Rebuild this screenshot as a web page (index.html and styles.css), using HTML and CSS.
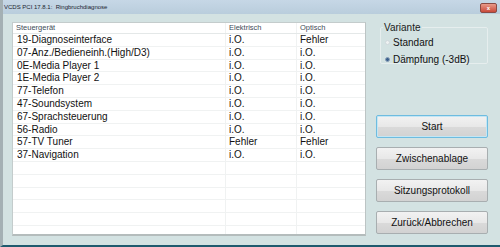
FILE: index.html
```html
<!DOCTYPE html>
<html lang="de">
<head>
    <meta charset="UTF-8" />
    <title>VCDS PCI 17.8.1: Ringbruchdiagnose</title>
    <link rel="stylesheet" href="styles.css">
</head>
<body>
    <div class="window">
        <div class="titlebar">
            <span class="title">VCDS PCI 17.8.1:&nbsp; Ringbruchdiagnose</span>
            <span class="close-btn"><span class="close-x">x</span></span>
        </div>
        <div class="content">
            <div class="list-box">
                <div class="row head">
                    <div class="cell first">Steuergerät</div>
                    <div class="cell">Elektrisch</div>
                    <div class="cell">Optisch</div>
                </div>
                <div class="row"><div class="cell first">19-Diagnoseinterface</div><div class="cell">i.O.</div><div class="cell">Fehler</div></div>
                <div class="row"><div class="cell first">07-Anz./Bedieneinh.(High/D3)</div><div class="cell">i.O.</div><div class="cell">i.O.</div></div>
                <div class="row"><div class="cell first">0E-Media Player 1</div><div class="cell">i.O.</div><div class="cell">i.O.</div></div>
                <div class="row"><div class="cell first">1E-Media Player 2</div><div class="cell">i.O.</div><div class="cell">i.O.</div></div>
                <div class="row"><div class="cell first">77-Telefon</div><div class="cell">i.O.</div><div class="cell">i.O.</div></div>
                <div class="row"><div class="cell first">47-Soundsystem</div><div class="cell">i.O.</div><div class="cell">i.O.</div></div>
                <div class="row"><div class="cell first">67-Sprachsteuerung</div><div class="cell">i.O.</div><div class="cell">i.O.</div></div>
                <div class="row"><div class="cell first">56-Radio</div><div class="cell">i.O.</div><div class="cell">i.O.</div></div>
                <div class="row"><div class="cell first">57-TV Tuner</div><div class="cell">Fehler</div><div class="cell">Fehler</div></div>
                <div class="row"><div class="cell first">37-Navigation</div><div class="cell">i.O.</div><div class="cell">i.O.</div></div>
                <div class="row"><div class="cell first"></div><div class="cell"></div><div class="cell"></div></div>
                <div class="row"><div class="cell first"></div><div class="cell"></div><div class="cell"></div></div>
                <div class="row"><div class="cell first"></div><div class="cell"></div><div class="cell"></div></div>
                <div class="row"><div class="cell first"></div><div class="cell"></div><div class="cell"></div></div>
                <div class="row"><div class="cell first"></div><div class="cell"></div><div class="cell"></div></div>
                <div class="row last"><div class="cell first"></div><div class="cell"></div><div class="cell"></div></div>
            </div>
            <div class="side">
                <fieldset class="group">
                    <legend>Variante</legend>
                    <label class="radio"><span class="dot"></span>Standard</label>
                    <label class="radio"><span class="dot on"></span>Dämpfung (-3dB)</label>
                </fieldset>
                <div class="buttons">
                    <div class="btn default">Start</div>
                    <div class="btn">Zwischenablage</div>
                    <div class="btn">Sitzungsprotokoll</div>
                    <div class="btn">Zurück/Abbrechen</div>
                </div>
            </div>
        </div>
    </div>
</body>
</html>
```

FILE: styles.css
```css
:root {
    --win-bg: #d3e2e2;
    --text: #111;
    --grid-line: #f0f2f2;
}
body {
    margin: 0;
    padding: 0;
    font-family: 'Liberation Sans', Arial, sans-serif;
    color: var(--text);
    background: #1f5a6e;
}
.window {
    width: 497px;
    height: 245px;
    border-left: 3px solid #a4b0b4;
    border-bottom: 2px solid #1f5a6e;
    background: var(--win-bg);
    display: flex;
    flex-direction: column;
}
.titlebar {
    height: 14px;
    background: linear-gradient(#c6d7e6, #b9cddc);
    display: flex;
    align-items: center;
    justify-content: space-between;
    padding: 0 3px 0 1px;
}
.title {
    font-size: 6px;
    color: #1a2530;
}
.close-btn {
    width: 15px;
    height: 8px;
    margin-top: 1px;
    background: linear-gradient(#e89a8a, #c9493a);
    border: 1px solid #8a4a44;
    border-radius: 2px;
    display: flex;
    align-items: center;
    justify-content: center;
}
.close-x {
    font-size: 6px;
    line-height: 6px;
    color: #fff;
    font-weight: bold;
}
.content {
    display: flex;
    padding: 8px 0 0 9px;
    gap: 10px;
}
.list-box {
    width: 352px;
    height: 211px;
    background: #fff;
    border: 1px solid #c4cccc;
    border-bottom: 2px solid #b4bcbc;
    border-right: 1px solid #bcc4c4;
    display: flex;
    flex-direction: column;
    overflow: hidden;
}
.row {
    display: grid;
    grid-template-columns: 212px 71px 69px;
    height: 12.8px;
    flex: none;
    font-size: 10px;
    line-height: 12.8px;
    border-bottom: 1px solid var(--grid-line);
    box-sizing: border-box;
}
.row.last {
    border-bottom: none;
}
.row.head {
    height: 11px;
    line-height: 10px;
    font-size: 7.5px;
    color: #3e4c58;
    border-bottom: 1px solid #e4e8e8;
}
.cell {
    padding-left: 3px;
    border-left: 1px solid var(--grid-line);
    white-space: nowrap;
    overflow: hidden;
}
.cell.first {
    padding-left: 4px;
    border-left: none;
}
.head .cell.first {
    padding-left: 3px;
}
.side {
    width: 112px;
    display: flex;
    flex-direction: column;
}
.group {
    margin: 0 0 0 4px;
    padding: 4px 0 6px 4px;
    border: 1px solid #e6eeee;
    border-radius: 2px;
    height: 30px;
    display: flex;
    flex-direction: column;
    gap: 6px;
}
.group legend {
    font-size: 10px;
    padding: 0 1px;
    margin-left: -2px;
    color: #1a1a1a;
}
.radio {
    font-size: 10px;
    display: flex;
    align-items: center;
    gap: 3px;
    line-height: 11px;
}
.dot {
    width: 3px;
    height: 3px;
    border-radius: 50%;
    border: 1px solid #d0d8dc;
    background: #eef2f2;
}
.dot.on {
    border-color: #8aa0b8;
    background: #3a5f8c;
}
.buttons {
    margin-top: 51px;
    display: flex;
    flex-direction: column;
    gap: 9px;
}
.btn {
    height: 21px;
    border: 1px solid #a8aeb0;
    border-radius: 2px;
    background: linear-gradient(#f2f2f2 0%, #e8e8e8 50%, #dadada 51%, #d2d2d2 100%);
    font-size: 10px;
    display: flex;
    align-items: center;
    justify-content: center;
    color: #111;
}
.btn.default {
    border-color: #6ebce0;
    box-shadow: inset 0 0 0 1px #c4e6f4;
}
```
